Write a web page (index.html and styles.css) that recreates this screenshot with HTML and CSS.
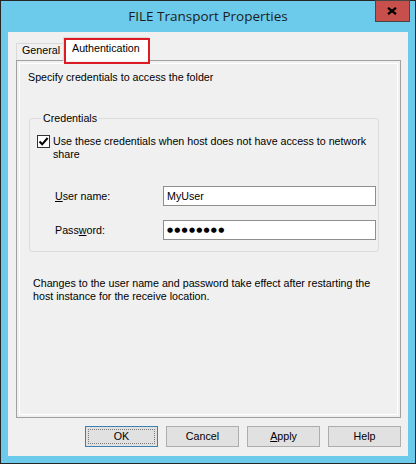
FILE: index.html
```html
<!DOCTYPE html>
<html>
<head>
<meta charset="utf-8">
<link rel="stylesheet" href="styles.css">
</head>
<body>
<div class="window">
  <div class="titlebar">
    <span class="title">FILE Transport Properties</span>
    <div class="close">
      <svg width="10" height="8" viewBox="0 0 10 8"><path d="M1 0.8 L9 7.2 M9 0.8 L1 7.2" stroke="#000" stroke-width="2.2" stroke-linecap="butt"/></svg>
    </div>
  </div>
  <div class="client">
    <div class="tabs">
      <div class="tab tab-general">General</div>
      <div class="tab tab-active">Authentication<span class="highlight"></span></div>
    </div>
    <div class="panel">
      <div class="panel-inner">
        <p class="intro">Specify credentials to access the folder</p>
        <fieldset class="group">
          <legend>Credentials</legend>
          <div class="check-row">
            <span class="checkbox">
              <svg width="11" height="11" viewBox="0 0 11 11"><path d="M1.5 5.5 L4.2 8.3 L9.6 2" fill="none" stroke="#000" stroke-width="2"/></svg>
            </span>
            <span class="check-text">Use these credentials when host does not have access to network share</span>
          </div>
          <div class="field field-user">
            <span class="field-label"><u>U</u>ser name:</span>
            <div class="input">MyUser</div>
          </div>
          <div class="field field-pass">
            <span class="field-label">Pass<u>w</u>ord:</span>
            <div class="input input-pass">●●●●●●●●</div>
          </div>
        </fieldset>
        <p class="note">Changes to the user name and password take effect after restarting the host instance for the receive location.</p>
      </div>
    </div>
    <div class="buttons">
      <div class="btn btn-default"><span class="focus">OK</span></div>
      <div class="btn">Cancel</div>
      <div class="btn"><u>A</u>pply</div>
      <div class="btn">Help</div>
    </div>
  </div>
</div>
</body>
</html>
```

FILE: styles.css
```css
html, body {
  margin: 0;
  padding: 0;
  background: #ffffff;
}

.window {
  width: 416px;
  height: 464px;
  box-sizing: border-box;
  border: 1px solid #262626;
  background: #6ccaea;
  display: flex;
  flex-direction: column;
  font-family: "Liberation Sans", Arial, sans-serif;
  font-size: 10.7px;
  color: #000;
}

.titlebar {
  height: 31px;
  display: grid;
  flex: none;
}

.title {
  grid-area: 1 / 1;
  justify-self: center;
  align-self: center;
  font-family: "Open Sans", "Liberation Sans", sans-serif;
  font-size: 13.5px;
  color: #1c1c1c;
  margin-top: -1px;
}

.close {
  grid-area: 1 / 1;
  justify-self: end;
  align-self: start;
  width: 35px;
  height: 22px;
  margin: -1px 5px 0 0;
  box-sizing: border-box;
  background: #c7504c;
  border: 1px solid #474747;
  display: flex;
  align-items: center;
  justify-content: center;
}

.close svg {
  display: block;
  margin-left: -2px;
}

.client {
  flex: 1;
  margin: 0 7px 7px 7px;
  background: #f0f0f0;
  padding: 5px 7px 9px 8px;
  display: flex;
  flex-direction: column;
  min-height: 0;
}

.tabs {
  display: flex;
  align-items: flex-end;
  height: 23px;
  flex: none;
}

.tab {
  box-sizing: border-box;
  line-height: 13px;
  white-space: nowrap;
}

.tab-general {
  width: 47px;
  height: 17px;
  border: 1px solid #d9d9d9;
  border-right: none;
  border-bottom: none;
  background: #f0f0f0;
  padding-left: 5px;
}

.tab-active {
  width: 86px;
  height: 24px;
  margin-bottom: -1px;
  border: 1px solid #d9d9d9;
  border-bottom: none;
  background: #ffffff;
  padding: 4px 0 0 8px;
  position: relative;
  z-index: 1;
}

.highlight {
  position: absolute;
  left: 0;
  top: 0;
  right: -2px;
  bottom: -3px;
  border: 2px solid #dc1c24;
}

.panel {
  flex: 1;
  box-sizing: border-box;
  border: 1px solid #a0a0a0;
  padding: 2px;
  background: #f0f0f0;
  min-height: 0;
}

.panel-inner {
  height: 100%;
  box-sizing: border-box;
  border: 1px solid #ffffff;
  overflow: hidden;
}

.intro {
  margin: 7px 0 0 8px;
  line-height: 13px;
}

.group {
  margin: 28px 18px 0 9px;
  padding: 10px 0 11px 7px;
  border: 1px solid #dcdcdc;
  border-radius: 3px;
  min-width: 0;
}

.group legend {
  margin-left: 4px;
  padding: 0 2px;
  line-height: 13px;
}

.check-row {
  display: flex;
  align-items: flex-start;
}

.checkbox {
  width: 13px;
  height: 13px;
  box-sizing: border-box;
  border: 1px solid #333333;
  background: #ffffff;
  margin-right: 3px;
  flex: none;
  display: flex;
  align-items: center;
  justify-content: center;
}

.checkbox svg {
  display: block;
}

.check-text {
  width: 322px;
  line-height: 13px;
}

.field {
  display: flex;
  align-items: center;
  padding-left: 18px;
}

.field-user {
  margin-top: 25px;
}

.field-pass {
  margin-top: 14px;
}

.field-label {
  width: 108px;
  line-height: 13px;
}

.input {
  width: 213px;
  height: 20px;
  box-sizing: border-box;
  border: 1px solid #8e8e8e;
  background: #ffffff;
  padding-left: 3px;
  line-height: 18px;
}

.input-pass {
  font-family: "DejaVu Sans", sans-serif;
  font-size: 7px;
  letter-spacing: 1.2px;
  padding-left: 3px;
}

.note {
  margin: 25px 0 0 13px;
  width: 350px;
  line-height: 13px;
}

.buttons {
  display: flex;
  justify-content: flex-end;
  gap: 8px;
  margin-top: 8px;
  flex: none;
}

.btn {
  width: 73px;
  height: 21px;
  box-sizing: border-box;
  border: 1px solid #adadad;
  background: #e1e1e1;
  display: flex;
  align-items: center;
  justify-content: center;
  line-height: 13px;
}

.btn-default {
  border-color: #3c7fb1;
  padding: 2px;
}

.focus {
  flex: 1;
  align-self: stretch;
  border: 1px dotted #7a7a7a;
  display: flex;
  align-items: center;
  justify-content: center;
}
```
